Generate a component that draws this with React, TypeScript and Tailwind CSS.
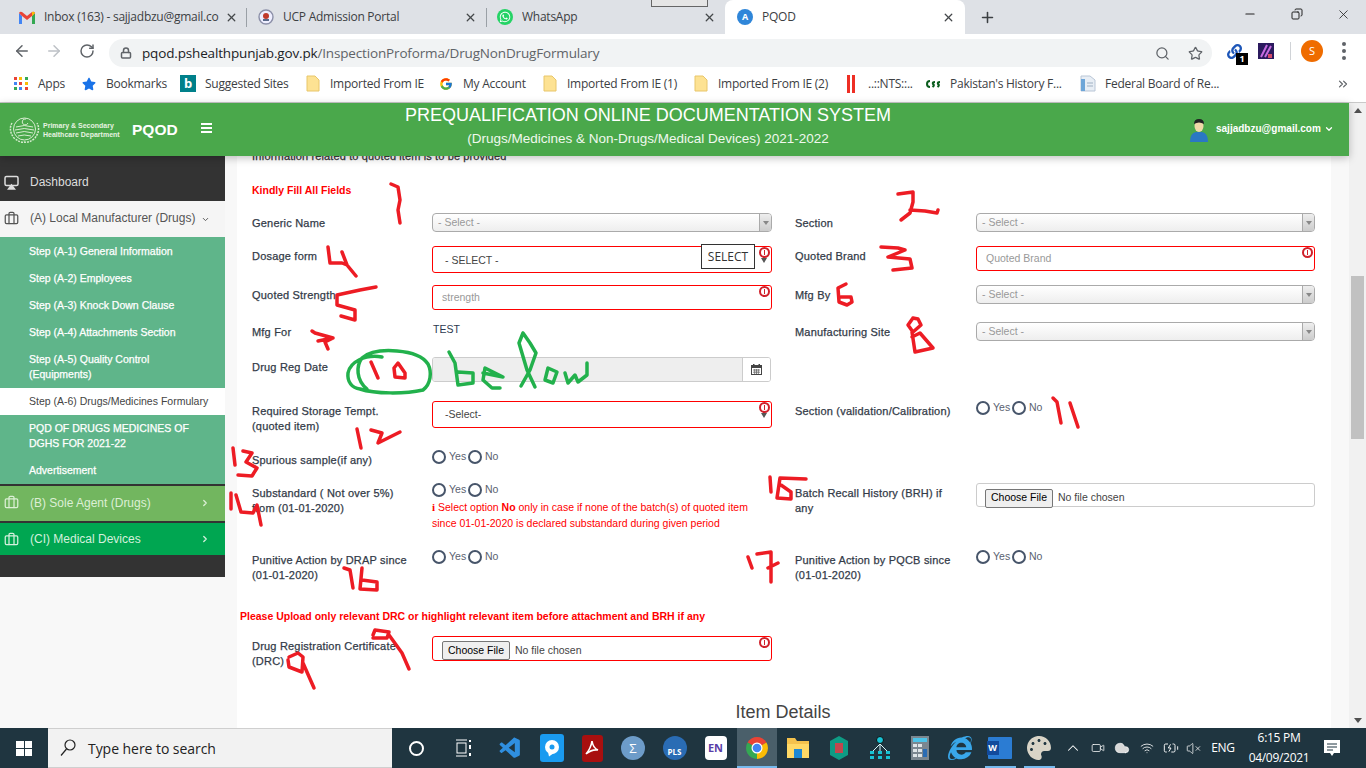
import React from "react";
import { ArrowLeft, ArrowRight, RotateCw, Lock, Search, Star, X, Plus, Minus, Copy, ChevronDown, ChevronRight, ChevronUp, Briefcase, Cloud, Wifi, VolumeX, ChevronsRight, Video, BatteryCharging } from "lucide-react";
import { FaWhatsapp, FaStar, FaInternetExplorer, FaPalette, FaLink } from "react-icons/fa";
import { FcGoogle } from "react-icons/fc";
import { VscVscode } from "react-icons/vsc";

const UI = "[font-family:'Open_Sans','Noto_Sans',sans-serif]";

function Gmail() {
  return (
    <svg width="16" height="13" viewBox="0 0 16 13">
      <path d="M0 2 L0 13 L3 13 L3 5 Z" fill="#4285f4" />
      <path d="M16 2 L16 13 L13 13 L13 5 Z" fill="#34a853" />
      <path d="M0 2 Q1 0 3 1 L8 5 L13 1 Q15 0 16 2 L13 5 L8 9 L3 5 Z" fill="#ea4335" />
      <path d="M13 1 Q15 0 16 2 L13 5 Z" fill="#fbbc05" />
    </svg>
  );
}

function Tab({ w, icon, label, active, divider, pl, pr }: { w: string; icon: React.ReactNode; label: string; active?: boolean; divider?: boolean; pl: string; pr: string }) {
  return (
    <div className={`${w} ${pl} ${pr} h-[34px] flex items-center relative ${active ? "bg-white rounded-t-lg" : ""}`}>
      <div className="w-4 h-4 flex items-center justify-center shrink-0">{icon}</div>
      <span className="ml-[9px] flex-1 overflow-hidden whitespace-nowrap text-[12px] text-[#3c4043] tracking-[-0.25px]">{label}</span>
      <X size={13} strokeWidth={2.4} className="text-[#44474a] shrink-0" />
      {divider && <div className="absolute right-0 top-[8px] h-[19px] w-px bg-[#9aa0a6]" />}
    </div>
  );
}

function FolderIcon() {
  return (
    <svg width="14" height="17" viewBox="0 0 14 17">
      <path d="M1 1 H9 L13 5 V16 H1 Z" fill="#fde293" stroke="#e8c66a" />
    </svg>
  );
}

function AppsIcon() {
  const c = ["#ea4335", "#fbbc05", "#34a853", "#4285f4", "#ea4335", "#fbbc05", "#34a853", "#4285f4", "#ea4335"];
  return (
    <div className="grid grid-cols-3 gap-[2px] w-[14px]">
      {c.map((x, i) => (
        <svg key={i} width="3" height="3"><rect width="3" height="3" fill={x} /></svg>
      ))}
    </div>
  );
}

const bookmarks: { w: string; icon: React.ReactNode; label: string }[] = [
  { w: "w-[68px]", icon: <AppsIcon />, label: "Apps" },
  { w: "w-[99px]", icon: <FaStar size={14} className="text-[#1a73e8]" />, label: "Bookmarks" },
  { w: "w-[125px]", icon: <div className="w-4 h-[17px] bg-[#00808a] text-white font-bold text-[13px] leading-[17px] text-center">b</div>, label: "Suggested Sites" },
  { w: "w-[133px]", icon: <FolderIcon />, label: "Imported From IE" },
  { w: "w-[104px]", icon: <FcGoogle size={14} />, label: "My Account" },
  { w: "w-[151px]", icon: <FolderIcon />, label: "Imported From IE (1)" },
  { w: "w-[150px]", icon: <FolderIcon />, label: "Imported From IE (2)" },
  {
    w: "w-[82px]",
    icon: (
      <svg width="10" height="18"><rect x="1" width="3" height="18" fill="#ee2e24" /><rect x="6" width="3" height="18" fill="#ee2e24" /></svg>
    ),
    label: "..::NTS::..",
  },
  {
    w: "w-[155px]",
    icon: (
      <svg width="16" height="10" viewBox="0 0 16 10" fill="none" stroke="#0b5d1e" strokeWidth="2">
        <path d="M5 2 A3 3 0 1 0 5 8" /><path d="M10 3 Q7 3 8 5 Q10 6 7.5 8" /><path d="M15 3 Q12 3 13 5 Q15 6 12.5 8" />
      </svg>
    ),
    label: "Pakistan's History F...",
  },
  {
    w: "w-[256px]",
    icon: (
      <svg width="16" height="17" viewBox="0 0 16 17"><path d="M1 1 H10 L15 5 V16 H1 Z" fill="#e8eef5" stroke="#b9c6d6" /><rect x="1" y="4" width="4" height="12" fill="#6ea6d8" /><path d="M7 8 H13 M7 11 H13" stroke="#9fb0c2" /></svg>
    ),
    label: "Federal Board of Re...",
  },
];

function BrowserChrome() {
  return (
    <div className={UI}>
      <div className="h-[34px] bg-[#dee1e6] flex relative">
        <Tab w="w-[247px]" pl="pl-[19px]" pr="pr-[9px]" icon={<Gmail />} label="Inbox (163) - sajjadbzu@gmail.co" divider />
        <Tab
          w="w-[240px]"
          pl="pl-[11px]"
          pr="pr-[10px]"
          icon={
            <svg width="16" height="16" viewBox="0 0 16 16"><circle cx="8" cy="8" r="7" fill="#eef" stroke="#8b8fa8" strokeWidth="1.4" /><circle cx="8" cy="7" r="3" fill="#c0392b" /><rect x="5" y="10" width="6" height="2" fill="#5a6a8a" /></svg>
          }
          label="UCP Admission Portal"
          divider
        />
        <Tab w="w-[238px]" pl="pl-[10px]" pr="pr-[9px]" icon={<div className="w-4 h-4 rounded-full bg-[#25d366] flex items-center justify-center"><FaWhatsapp size={12} className="text-white" /></div>} label="WhatsApp" />
        <Tab w="w-[240px]" pl="pl-[12px]" pr="pr-[10px]" active icon={<div className="w-4 h-4 rounded-full bg-[#2f86d9] text-white text-[9px] font-bold leading-4 text-center">A</div>} label="PQOD" />
        <Plus size={17} strokeWidth={2.2} className="ml-[14px] mt-[9px] text-[#3c4043]" />
        <Minus size={14} className="ml-[247px] mt-[7px] text-[#222]" />
        <Copy size={12} className="ml-[34px] mt-[8px] text-[#222] -scale-x-100" />
        <X size={15} strokeWidth={1.3} className="ml-[33px] mt-[7px] text-[#222]" />
        <div className="absolute left-[651px] top-0 w-[57px] h-[7px] border-y border-x border-[#666] border-t-0 bg-[#e5e5e5]" />
      </div>
      <div className="h-[33px] bg-white flex items-center">
        <ArrowLeft size={18} strokeWidth={2} className="ml-[13px] text-[#5f6368]" />
        <ArrowRight size={18} strokeWidth={2} className="ml-[14px] text-[#bdc1c6]" />
        <RotateCw size={16} strokeWidth={2.2} className="ml-[16px] text-[#5f6368]" />
        <div className="ml-[14px] w-[1103px] h-[28px] mt-[5px] rounded-full bg-[#f1f3f4] flex items-center">
          <Lock size={12} strokeWidth={3} className="ml-[11px] text-[#5f6368]" />
          <span className="ml-[10px] text-[13.5px] tracking-[-0.16px] text-[#202124] whitespace-nowrap">
            pqod.pshealthpunjab.gov.pk<span className="text-[#5f6368]">/InspectionProforma/DrugNonDrugFormulary</span>
          </span>
          <Search size={15} className="ml-auto text-[#5f6368]" />
          <Star size={15} strokeWidth={2} className="ml-[18px] mr-[9px] text-[#5f6368]" />
        </div>
        <div className="ml-[15px] w-4 h-4 relative mt-[2px]">
          <FaLink size={15} className="text-[#1d56b8]" />
          <div className="absolute left-[9px] top-[9px] w-[12px] h-[12px] bg-black text-white text-[9px] font-bold leading-[12px] text-center">1</div>
        </div>
        <svg width="16" height="16" className="ml-[15px]" viewBox="0 0 16 16">
          <rect width="16" height="16" fill="#2b1a5e" /><path d="M3 14 L9 2 M7 14 L13 3" stroke="#c56be0" strokeWidth="2" /><rect x="10" y="11" width="4" height="4" fill="#d04a6a" />
        </svg>
        <div className="ml-[16px] w-px h-[18px] bg-[#d0d3d7]" />
        <div className="ml-[10px] w-[22px] h-[22px] rounded-full bg-[#ef6c00] text-white text-[11px] leading-[22px] text-center">S</div>
        <div className="ml-[19px] flex flex-col gap-[3px]">
          <div className="w-[4px] h-[4px] rounded-full bg-[#5f6368]" />
          <div className="w-[4px] h-[4px] rounded-full bg-[#5f6368]" />
          <div className="w-[4px] h-[4px] rounded-full bg-[#5f6368]" />
        </div>
      </div>
      <div className="h-[36px] bg-white border-b border-[#c9c9c9] flex items-center pl-[13px] pb-[2px]">
        {bookmarks.map((b) => (
          <div key={b.label} className={`${b.w} flex items-center gap-[9px] shrink-0`}>
            <div className="w-4 flex justify-center shrink-0">{b.icon}</div>
            <span className="text-[12px] text-[#3c4043] whitespace-nowrap tracking-[-0.25px]">{b.label}</span>
          </div>
        ))}
        <ChevronsRight size={14} className="text-[#5f6368]" />
      </div>
    </div>
  );
}

function Crest() {
  return (
    <svg width="33" height="29" viewBox="0 0 33 29" fill="none" stroke="#d7ecd0" strokeWidth="1">
      <circle cx="16.5" cy="14" r="11" />
      <path d="M8 12 Q16 9 25 12 M7 15 Q16 12 26 15 M8 18 Q16 15 25 18 M10 21 Q16 19 23 21" />
      <path d="M18 4 A3 3 0 1 0 20 8" />
      <path d="M4 8 Q0 15 6 23 Q12 28 16 27 Q22 28 27 23 Q33 15 29 8" strokeDasharray="2 1" strokeWidth="1.5" />
    </svg>
  );
}

function Header() {
  return (
    <div className="h-[53px] bg-[#4aa84b] flex items-center shrink-0 relative z-10 shadow-[0_2px_8px_rgba(0,0,0,0.25)] text-white">
      <div className="ml-[8px] w-[33px] shrink-0"><Crest /></div>
      <div className="ml-[2px] w-[89px] text-[7px] leading-[9px] font-bold text-[#e6f2e0] shrink-0">
        Primary &amp; Secondary
        <br />
        Healthcare Department
      </div>
      <div className="w-[59px] text-[15.5px] font-bold shrink-0">PQOD</div>
      <div className="ml-[10px] w-[11px] flex flex-col gap-[2px] shrink-0 -mt-[3px]">
        <div className="h-[2px] bg-white" />
        <div className="h-[2px] bg-white" />
        <div className="h-[2px] bg-white" />
      </div>
      <div className="w-[872px] shrink-0 text-center -mt-[7px]">
        <div className="text-[18px] leading-[22px] font-medium">PREQUALIFICATION ONLINE DOCUMENTATION SYSTEM</div>
        <div className="text-[13.5px] leading-[20px] mt-[3px] text-[#f0f8ee]">(Drugs/Medicines &amp; Non-Drugs/Medical Devices) 2021-2022</div>
      </div>
      <svg width="20" height="24" viewBox="0 0 20 24" className="ml-[105px] shrink-0">
        <path d="M1 24 Q1 15 7 14 L13 14 Q19 15 19 24 Z" fill="#2a78c4" />
        <ellipse cx="10" cy="8" rx="4.5" ry="6" fill="#f0d8a8" />
        <path d="M5 6 Q5 1 10 1 Q15 1 15 6 Q10 3 5 6 Z" fill="#222" />
      </svg>
      <span className="ml-[7px] text-[10px] font-bold whitespace-nowrap -mt-[3px]">sajjadbzu@gmail.com</span>
      <ChevronDown size={10} strokeWidth={3} className="ml-[3px] -mt-[2px]" />
    </div>
  );
}

const steps = [
  "Step (A-1) General Information",
  "Step (A-2) Employees",
  "Step (A-3) Knock Down Clause",
  "Step (A-4) Attachments Section",
];

const STEP = "[-webkit-text-stroke:0.25px_white]";

function Sidebar() {
  return (
    <div className="w-[225px] shrink-0 h-[421px] bg-[#333333] flex flex-col text-[12px]">
      <div className="h-[45px] flex items-center pl-[4px] pt-[7px] text-[#dddddd]">
        <svg width="15" height="15" viewBox="0 0 15 15" fill="none" stroke="#dddddd" strokeWidth="1.5">
          <rect x="1" y="1.5" width="13" height="9" rx="1.5" />
          <path d="M7.5 10 L4.5 14 H10.5 Z" fill="#dddddd" />
        </svg>
        <span className="ml-[11px]">Dashboard</span>
      </div>
      <div className="h-[36px] bg-[#f5f5f5] flex items-center pl-[4px] pb-[2px] text-[#555555]">
        <Briefcase size={15} />
        <span className="ml-[11px]">(A) Local Manufacturer (Drugs)</span>
        <ChevronDown size={9} strokeWidth={2.5} className="ml-[6px] mt-[3px]" />
      </div>
      <div className="bg-[#5fb58a] text-white text-[10.5px] leading-[15px]">
        {steps.map((s) => (
          <div key={s} className={`h-[27px] pl-[29px] pt-[1px] flex items-center ${STEP}`}>{s}</div>
        ))}
        <div className={`h-[43px] pl-[29px] pt-[7px] ${STEP}`}>Step (A-5) Quality Control<br />(Equipments)</div>
        <div className="h-[27px] pl-[29px] flex items-center bg-white text-[#444444]">Step (A-6) Drugs/Medicines Formulary</div>
        <div className={`h-[43px] pl-[29px] pt-[6px] ${STEP}`}>PQD OF DRUGS MEDICINES OF<br />DGHS FOR 2021-22</div>
        <div className={`h-[26px] pl-[29px] pt-[5px] ${STEP}`}>Advertisement</div>
      </div>
      <div className="mt-[2px] h-[35px] bg-[#72b65f] flex items-center pl-[4px] pb-[2px] text-[#dcefd5]">
        <Briefcase size={15} />
        <span className="ml-[11px]">(B) Sole Agent (Drugs)</span>
        <ChevronRight size={10} strokeWidth={3} className="ml-auto mr-[15px]" />
      </div>
      <div className="mt-[2px] h-[32px] bg-[#00a651] flex items-center pl-[4px] text-[#d4f0dd]">
        <Briefcase size={15} />
        <span className="ml-[11px]">(CI) Medical Devices</span>
        <ChevronRight size={10} strokeWidth={3} className="ml-auto mr-[15px]" />
      </div>
    </div>
  );
}

function Err({ arrow }: { arrow?: boolean }) {
  return (
    <>
      <div className="absolute right-[1px] top-[0px] w-[11px] h-[11px] rounded-full border-2 border-[#d0202a] flex items-center justify-center bg-white/60">
        <div className="w-[1.5px] h-[5px] bg-[#d0202a]" />
      </div>
      {arrow && <div className="absolute right-[4px] top-[11px] w-0 h-0 border-x-[3px] border-x-transparent border-t-[5px] border-t-[#555555]" />}
    </>
  );
}

function Select2({ h }: { h: string }) {
  return (
    <div className={`${h} w-full border border-[#aaaaaa] rounded-[4px] bg-gradient-to-b from-white to-[#eeeeee] flex items-center overflow-hidden`}>
      <span className="pl-[5px] flex-1 text-[#999999] text-[10.5px]">- Select -</span>
      <div className="w-[12px] h-full border-l border-[#aaaaaa] bg-gradient-to-b from-[#eeeeee] to-[#cccccc] flex items-center justify-center">
        <div className="w-0 h-0 border-x-[3px] border-x-transparent border-t-[4px] border-t-[#888888]" />
      </div>
    </div>
  );
}

function RedInput({ h, placeholder }: { h: string; placeholder: string }) {
  return (
    <div className={`${h} w-full border border-[#ff0000] rounded-[3px] relative flex items-center`}>
      <input readOnly placeholder={placeholder} className="w-full pl-[9px] bg-transparent outline-none text-[10.5px] placeholder:text-[#999999]" />
      <Err />
    </div>
  );
}

function Radios() {
  return (
    <div className="flex items-center h-[14px] text-[10.5px] text-[#5a6270]">
      <input type="radio" readOnly className="appearance-none w-[14px] h-[14px] rounded-full border-2 border-[#47556a] bg-white" />
      <span className="ml-[3px] w-[19px]">Yes</span>
      <input type="radio" readOnly className="appearance-none w-[14px] h-[14px] rounded-full border-2 border-[#47556a] bg-white" />
      <span className="ml-[3px]">No</span>
    </div>
  );
}

function FileBtn() {
  return (
    <>
      <button className="w-[68px] h-[19px] bg-[#efefef] border border-[#767676] rounded-[2px] text-[10.5px] text-black shrink-0">Choose File</button>
      <span className="ml-[5px] text-[10.5px] text-[#444444]">No file chosen</span>
    </>
  );
}

function Calendar() {
  return (
    <svg width="11" height="11" viewBox="0 0 11 11">
      <rect x="0.5" y="1.5" width="10" height="9" fill="#fff" stroke="#444" />
      <rect x="0.5" y="1.5" width="10" height="2.5" fill="#444" />
      <rect x="2" y="0" width="1.5" height="2.5" fill="#444" />
      <rect x="7.5" y="0" width="1.5" height="2.5" fill="#444" />
      <path d="M2 6 H9 M2 8.2 H9 M3.7 5 V10 M5.5 5 V10 M7.3 5 V10" stroke="#666" strokeWidth="0.8" />
    </svg>
  );
}

function Cell({ label, side, children }: { label: React.ReactNode; side?: "right"; children?: React.ReactNode }) {
  return (
    <div className={`flex h-full ${side ? "w-[520px] ml-[23px]" : "w-[520px]"}`}>
      <div className="w-[181px] pr-[4px] shrink-0 pt-[3px] text-[11px] leading-[15px] tracking-[0.2px] text-[#333b48] [-webkit-text-stroke:0.25px_#333b48]">{label}</div>
      <div className={side ? "w-[339px]" : "w-[340px] -ml-[1px]"}>{children}</div>
    </div>
  );
}

function Row({ h, children }: { h: string; children: React.ReactNode }) {
  return <div className={`flex ${h}`}>{children}</div>;
}

function Form() {
  return (
    <div className="w-[1094px] h-[572px] bg-white pl-[15px] overflow-hidden">
      <div className="-mt-[7px] h-[15px] text-[11px] leading-[15px] tracking-[0.12px] text-[#333333] [-webkit-text-stroke:0.25px_#333333]">Information related to quoted item is to be provided</div>
      <div className="mt-[19px] h-[15px] text-[10.5px] leading-[15px] font-bold text-[#ff0000]">Kindly Fill All Fields</div>
      <div className="mt-[15px]" />
      <Row h="h-[33px]">
        <Cell label="Generic Name"><Select2 h="h-[19px]" /></Cell>
        <Cell label="Section" side="right"><Select2 h="h-[19px]" /></Cell>
      </Row>
      <Row h="h-[39px]">
        <Cell label="Dosage form">
          <div className="h-[27px] w-full border border-[#ff0000] rounded-[3px] relative flex items-center pl-[12px] text-[10.5px] text-[#444444]">
            <span className="mt-[2px]">- SELECT -</span>
            <Err arrow />
            <div className={`absolute left-[268px] -top-[3px] w-[54px] h-[25px] bg-white border border-[#333333] text-[12px] leading-[23px] text-center text-[#333333] ${UI}`}>SELECT</div>
          </div>
        </Cell>
        <Cell label="Quoted Brand" side="right"><RedInput h="h-[25px]" placeholder="Quoted Brand" /></Cell>
      </Row>
      <Row h="h-[37px]">
        <Cell label="Quoted Strength"><RedInput h="h-[25px]" placeholder="strength" /></Cell>
        <Cell label="Mfg By" side="right"><Select2 h="h-[19px]" /></Cell>
      </Row>
      <Row h="h-[35px]">
        <Cell label="Mfg For"><div className="pl-[1px] text-[10.5px] leading-[15px] text-[#2d3a50]">TEST</div></Cell>
        <Cell label="Manufacturing Site" side="right"><Select2 h="h-[19px]" /></Cell>
      </Row>
      <Row h="h-[44px]">
        <Cell label="Drug Reg Date">
          <div className="w-[339px] h-[25px] flex border border-[#cccccc] rounded-[3px] overflow-hidden">
            <div className="flex-1 bg-[#eeeeee]" />
            <div className="w-[28px] bg-white border-l border-[#cccccc] flex items-center justify-center">
              <Calendar />
            </div>
          </div>
        </Cell>
      </Row>
      <Row h="h-[49px]">
        <Cell label={<>Required Storage Tempt.<br />(quoted item)</>}>
          <div className="h-[27px] w-full border border-[#ff0000] rounded-[3px] relative flex items-center pl-[12px] text-[10.5px] text-[#444444]">
            -Select-
            <Err arrow />
          </div>
        </Cell>
        <Cell label="Section (validation/Calibration)" side="right"><Radios /></Cell>
      </Row>
      <Row h="h-[33px]">
        <Cell label="Spurious sample(if any)"><Radios /></Cell>
      </Row>
      <Row h="h-[67px]">
        <Cell label={<>Substandard ( Not over 5%)<br />from (01-01-2020)</>}>
          <Radios />
          <div className="mt-[2px] text-[10.5px] leading-[16px] text-[#ff0000] whitespace-nowrap">
            <b className="[font-family:'Liberation_Serif',serif] text-[11px]">i</b> Select option <b>No</b> only in case if none of the batch(s) of quoted item
            <br />
            since 01-01-2020 is declared substandard during given period
          </div>
        </Cell>
        <Cell label={<>Batch Recall History (BRH) if<br />any</>} side="right">
          <div className="h-[24px] w-full border border-[#cccccc] rounded-[3px] flex items-center pl-[8px] pt-[6px]"><FileBtn /></div>
        </Cell>
      </Row>
      <Row h="h-[59px]">
        <Cell label={<>Punitive Action by DRAP since<br />(01-01-2020)</>}><Radios /></Cell>
        <Cell label={<>Punitive Action by PQCB since<br />(01-01-2020)</>} side="right"><Radios /></Cell>
      </Row>
      <div className="-ml-[12px] h-[15px] text-[10.5px] leading-[15px] font-bold text-[#ff0000]">Please Upload only relevant DRC or highlight relevant item before attachment and BRH if any</div>
      <div className="mt-[12px]" />
      <Row h="h-[64px]">
        <Cell label={<>Drug Registration Certificate<br />(DRC)</>}>
          <div className="h-[25px] w-full border border-[#ff0000] rounded-[3px] relative flex items-center pl-[9px] pt-[4px]">
            <FileBtn />
            <Err />
          </div>
        </Cell>
      </Row>
      <div className="w-[1062px] text-center text-[18px] leading-[24px] text-[#444444]">Item Details</div>
    </div>
  );
}

function Scrollbar() {
  return (
    <div className="w-[17px] bg-[#f1f1f1] shrink-0 flex flex-col items-center h-[625px] relative">
      <div className="mt-[5px] w-0 h-0 border-x-[4px] border-x-transparent border-b-[5px] border-b-[#505050]" />
      <div className="mt-[163px] w-[13px] h-[163px] bg-[#c1c1c1]" />
      <div className="mt-auto mb-[5px] w-0 h-0 border-x-[4px] border-x-transparent border-t-[5px] border-t-[#505050]" />
    </div>
  );
}

function Slot({ w, children, active, under }: { w: string; children?: React.ReactNode; active?: boolean; under?: string }) {
  return (
    <div className={`${w} h-[40px] flex items-center justify-center shrink-0 relative ${active ? "bg-[#4a5f6a]" : ""}`}>
      {children}
      {(active || under) && <div className={`absolute bottom-0 h-[2px] bg-[#76b9ed] ${under || "left-0 right-0"}`} />}
    </div>
  );
}

function ChromeIcon() {
  return (
    <svg width="24" height="24" viewBox="0 0 24 24">
      <path d="M12 12 L2.5 6.5 A11 11 0 0 1 21.5 6.5 Z" fill="#ea4335" />
      <path d="M12 12 L21.5 6.5 A11 11 0 0 1 12 23 Z" fill="#fbbc05" />
      <path d="M12 12 L12 23 A11 11 0 0 1 2.5 6.5 Z" fill="#34a853" />
      <circle cx="12" cy="12" r="5.5" fill="#fff" />
      <circle cx="12" cy="12" r="4.3" fill="#4285f4" />
    </svg>
  );
}

function Taskbar() {
  return (
    <div className={`h-[40px] bg-[#1f3540] flex items-center text-white ${UI}`}>
      <div className="ml-[16px] w-[16px] grid grid-cols-2 gap-[1px] shrink-0">
        <div className="h-[7px] bg-white" /><div className="h-[7px] bg-white" /><div className="h-[7px] bg-white" /><div className="h-[7px] bg-white" />
      </div>
      <div className="ml-[16px] w-[344px] h-[40px] bg-[#f2f2f2] flex items-center shrink-0 border-y border-[#cfcfcf]">
        <svg width="16" height="18" viewBox="0 0 16 18" fill="none" stroke="#222" strokeWidth="1.2" className="ml-[12px]">
          <circle cx="10" cy="6" r="5" /><path d="M6.5 10 L1 16.5" />
        </svg>
        <span className="ml-[12px] text-[14px] text-[#222222] tracking-[-0.05px]">Type here to search</span>
      </div>
      <Slot w="w-[48px]"><div className="w-[15px] h-[15px] rounded-full border-2 border-white" /></Slot>
      <Slot w="w-[48px]">
        <svg width="16" height="18" viewBox="0 0 16 18" fill="none" stroke="#fff"><path d="M0 1 H11 M0 17 H11" /><rect x="1" y="4" width="9" height="10" /><path d="M14 1 V3 M14 6 V10 M14 14 V17" strokeWidth="2" /></svg>
      </Slot>
      <Slot w="w-[44px]"><VscVscode size={25} className="text-[#2f8fe0]" /></Slot>
      <Slot w="w-[40px]">
        <div className="w-[24px] h-[28px] rounded-[3px] bg-[#1a9bf0] flex items-center justify-center">
          <svg width="16" height="18" viewBox="0 0 16 18"><circle cx="8" cy="8" r="7" fill="#fff" /><path d="M4 13 L5 17.5 L10 14 Z" fill="#fff" /><circle cx="8" cy="8" r="2.5" fill="#1a9bf0" /></svg>
        </div>
      </Slot>
      <Slot w="w-[40px]">
        <div className="w-[21px] h-[27px] rounded-[3px] bg-[#a80f0f] flex items-center justify-center">
          <svg width="14" height="16" viewBox="0 0 14 16" fill="none" stroke="#fff" strokeWidth="1.6"><path d="M7 1 Q6 8 1 14 Q7 9 13 10 Q8 8 7 1 Z" /></svg>
        </div>
      </Slot>
      <Slot w="w-[42px]">
        <div className="w-[24px] h-[24px] rounded-full bg-[#6d9cc9] text-white text-[13px] leading-[24px] text-center">Σ</div>
      </Slot>
      <Slot w="w-[41px]">
        <div className="w-[24px] h-[24px] rounded-full bg-[#2a6cb4] text-white text-[8px] font-bold leading-[32px] text-center">PLS</div>
      </Slot>
      <Slot w="w-[41px]">
        <div className="w-[22px] h-[24px] rounded-[4px] bg-white text-[#5a3ea8] text-[11px] font-bold leading-[24px] text-center">EN</div>
      </Slot>
      <div className="w-px" />
      <Slot w="w-[40px]" active><ChromeIcon /></Slot>
      <Slot w="w-[41px]">
        <svg width="22" height="20" viewBox="0 0 22 20"><path d="M0 0 H8 L10 3 H22 V20 H0 Z" fill="#f4c24d" /><rect x="0" y="6" width="22" height="14" fill="#ffd966" /><rect x="7" y="11" width="8" height="9" fill="#1e88d4" /></svg>
      </Slot>
      <Slot w="w-[41px]">
        <svg width="18" height="24" viewBox="0 0 18 24"><path d="M9 0 L18 5 V19 L9 24 L0 19 V5 Z" fill="#0e9b84" /><rect x="5" y="7" width="8" height="10" fill="#c2484e" /></svg>
      </Slot>
      <Slot w="w-[41px]">
        <svg width="20" height="24" viewBox="0 0 20 24" fill="none" stroke="#d7f2f5"><circle cx="10" cy="4" r="3.5" fill="#18c3d6" stroke="#111" /><path d="M10 8 L2 16 M10 8 V16 M10 8 L18 16" /><g fill="#18c3d6" stroke="none"><rect x="0" y="15" width="4" height="3" /><rect x="8" y="15" width="4" height="3" /><rect x="16" y="15" width="4" height="3" /><rect x="0" y="20" width="4" height="3" /><rect x="8" y="20" width="4" height="3" /><rect x="16" y="20" width="4" height="3" /></g></svg>
      </Slot>
      <Slot w="w-[40px]">
        <svg width="18" height="24" viewBox="0 0 18 24"><rect width="18" height="24" fill="#7b8790" /><rect x="2" y="2" width="14" height="4" fill="#4dc3e8" /><g fill="#dfe5e8"><rect x="2" y="8" width="4" height="3" /><rect x="7" y="8" width="4" height="3" /><rect x="2" y="13" width="4" height="3" /><rect x="7" y="13" width="4" height="3" /><rect x="2" y="18" width="4" height="3" /><rect x="7" y="18" width="4" height="3" /></g><rect x="12" y="13" width="4" height="8" fill="#2a6cb4" /></svg>
      </Slot>
      <Slot w="w-[40px]">
        <FaInternetExplorer size={24} className="text-[#39a7ea]" />
      </Slot>
      <Slot w="w-[39px]" under="left-[5px] w-[31px]">
        <div className="relative w-[24px] h-[22px] bg-[#2b7cd3] rounded-[1px]">
          <div className="absolute -left-[1px] top-[4px] w-[12px] h-[14px] bg-[#124a9c] text-white text-[9px] font-bold leading-[14px] text-center">W</div>
        </div>
      </Slot>
      <Slot w="w-[40px]" under="left-[5px] w-[31px]"><FaPalette size={24} className="text-[#d9d4c7]" /></Slot>
      <Slot w="w-[28px]"><ChevronUp size={18} strokeWidth={1.4} /></Slot>
      <Slot w="w-[22px]"><Video size={14} strokeWidth={1.3} /></Slot>
      <Slot w="w-[26px]"><Cloud size={16} fill="#d8d8d8" strokeWidth={1} /></Slot>
      <Slot w="w-[24px]"><Wifi size={14} strokeWidth={1.4} /></Slot>
      <Slot w="w-[24px]"><BatteryCharging size={16} strokeWidth={1.4} /></Slot>
      <Slot w="w-[20px]"><VolumeX size={15} strokeWidth={1.2} /></Slot>
      <Slot w="w-[40px]"><span className="text-[12px] tracking-[-0.3px]">ENG</span></Slot>
      <Slot w="w-[72px]">
        <div className="text-center text-[12px] leading-[20px] tracking-[-0.3px] whitespace-nowrap">6:15 PM<br />04/09/2021</div>
      </Slot>
      <Slot w="w-[34px]">
        <svg width="16" height="17" viewBox="0 0 16 17"><path d="M0 0 H16 V13 H10 L8 16 L6 13 H0 Z" fill="#fff" /><path d="M3 4 H13 M3 7 H13 M3 10 H9" stroke="#1f3540" /></svg>
      </Slot>
    </div>
  );
}

function Scribbles() {
  const red = [
    "M391 184 L398 187 L400 200 L398 210 L400 223",
    "M898 194 L913 192 L913 202 L910 213 L901 220 M910 210 L925 211 L937 213 L938 210",
    "M881 247 L898 248 L905 250 L888 257 L910 259 L912 268 L893 270",
    "M328 247 L330 263 L342 263 L347 265 M342 252 L347 265 L356 276",
    "M376 287 L360 290 L337 295 L337 305 L355 310 L355 320 L341 316",
    "M846 284 L838 288 L839 302 L847 305 L852 302 L851 297 L841 297",
    "M312 331 L315 333 L333 338 L325 342 L328 349 M318 341 L333 338",
    "M913 318 L908 325 L913 332 L921 325 L918 319 L913 318 M912 332 L915 352 L933 348 L920 333 L912 337",
    "M371 362 L378 378 M395 377 L394 368 L398 363 L405 373 L405 378 Z",
    "M357 429 L361 448 M371 430 L382 433 L378 443 L400 432",
    "M233 448 L235 465 M243 451 L252 453 L246 462 L257 468 L252 476 L238 475",
    "M231 493 L231 509 M236 495 L241 512 L253 513 L257 505 L261 525",
    "M770 477 L771 492 M806 479 L780 478 L777 498 L791 499 L791 492 L781 485",
    "M344 568 L350 570 L353 588 M362 568 L360 589 L377 590 L377 582 L362 580",
    "M748 557 L752 568 M757 554 L771 552 L771 582 M768 568 L778 563",
    "M1053 398 L1057 402 L1061 423 M1070 403 L1078 427",
    "M373 635 L375 630 L389 632 L387 638 L373 638 M389 635 L402 653 L409 669",
    "M289 657 L298 653 L303 657 L302 672 L289 667 L288 660 M303 663 L314 688",
  ];
  const green = [
    "M382 357 C365 354 350 362 348 373 C347 382 352 388 360 389 C375 394 405 394 423 390 C431 384 432 372 428 364 C422 355 410 352 397 351 C385 350 370 351 362 358 C356 366 356 380 367 389",
    "M449 352 L455 363 L458 385 L473 383 L473 373 L458 372",
    "M483 373 L503 377 L485 368 L483 380 L492 388 L500 388",
    "M523 333 L519 343 L527 370 L535 387 M523 333 L530 343 L536 353 L530 370 L521 386",
    "M548 368 L545 380 L553 383 L557 372 Z",
    "M565 373 L568 383 L575 375 L578 382 L587 375 L587 363",
  ];
  return (
    <svg width="1366" height="768" className="absolute left-0 top-0 z-20 pointer-events-none" fill="none" strokeLinecap="round" strokeLinejoin="round">
      {red.map((d) => <path key={d} d={d} stroke="#ed1c24" strokeWidth="3.5" />)}
      {green.map((d) => <path key={d} d={d} stroke="#22b14c" strokeWidth="3.5" />)}
    </svg>
  );
}

export default function App() {
  return (
    <div className="relative w-[1366px] h-[768px] overflow-hidden bg-white [font-family:'Liberation_Sans',Arial,sans-serif]">
      <BrowserChrome />
      <div className="flex h-[625px]">
        <div className="w-[1349px] flex flex-col shrink-0">
          <Header />
          <div className="flex flex-1 overflow-hidden bg-[#f8f8f8]">
            <Sidebar />
            <div className="ml-[12px]"><Form /></div>
          </div>
        </div>
        <Scrollbar />
      </div>
      <Taskbar />
      <Scribbles />
    </div>
  );
}
